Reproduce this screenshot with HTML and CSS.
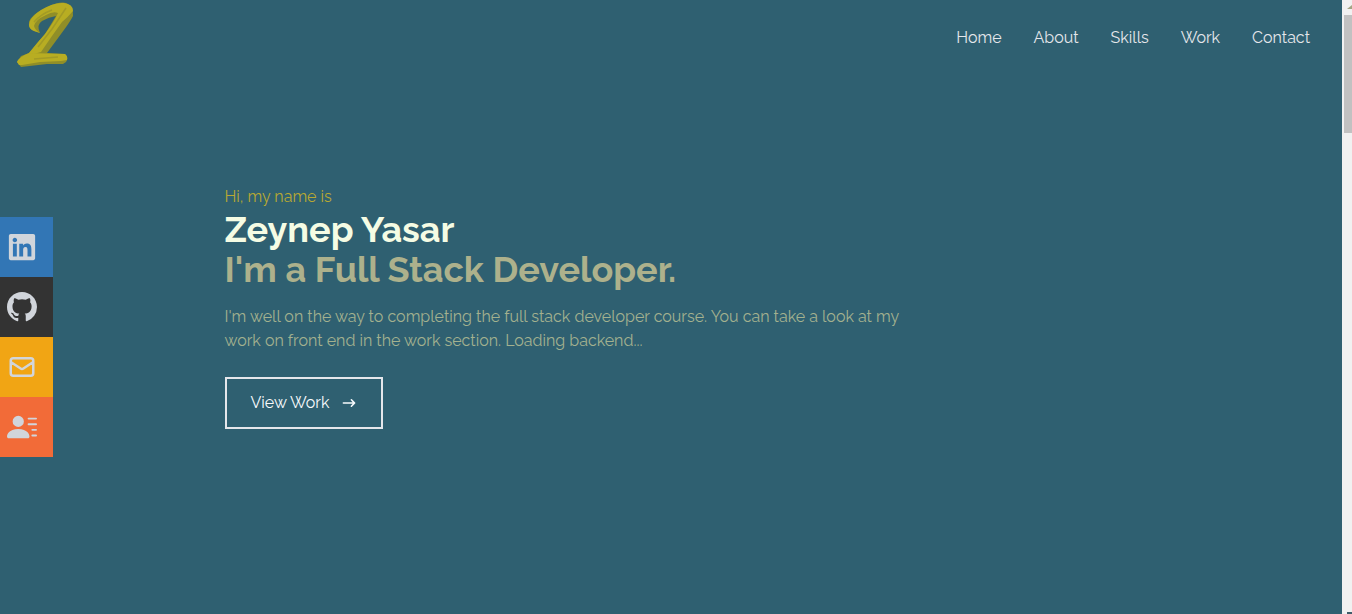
FILE: index.html
```html
<!DOCTYPE html>
<html lang="en">
<head>
<meta charset="utf-8">
<meta name="viewport" content="width=device-width, initial-scale=1">
<title>Zeynep Yasar</title>
<link rel="stylesheet" href="styles.css">
</head>
<body>
<div class="page">
  <header class="navbar">
    <a class="logo" href="#home" aria-label="Zeynep Yasar">
      <svg width="60" height="68" viewBox="0 0 60 68">
        <path fill="#908e28" d="M13 22Q15 15 29 8Q44 1 50 3Q58 6 57 16Q54 22 45 34L31 53 49 54Q53 58 50 62L47 64 31 64 5 67 1 62 5 56 13 53Q21 43 29 34L40 16Q33 17 26 21Q20 25 24 33L18 31Q12 28 13 22Z"/>
        <path fill="#b8ad22" d="M13 25Q13 18 25 10Q38 2 48 3Q57 4 57 11Q52 17 46 22L36 36 25 52 18 54 13 53Q21 43 29 34Q38 22 42 13Q37 11 30 15Q19 20 18 26Q19 30 24 33L18 31Q13 29 13 25Z"/>
        <path fill="#b8ad22" d="M1 62Q3 57 13 53L49 54Q52 56 51 60L45 61 24 62 6 65 3 65Z"/>
        <path fill="none" stroke="#a39b25" stroke-width="1.5" d="M50 8Q42 20 36 29L22 47M18 59L42 57M18 22Q25 14 36 10"/>
      </svg>
    </a>
    <nav>
      <ul class="menu">
        <li><a href="#home">Home</a></li>
        <li><a href="#about">About</a></li>
        <li><a href="#skills">Skills</a></li>
        <li><a href="#work">Work</a></li>
        <li><a href="#contact">Contact</a></li>
      </ul>
    </nav>
  </header>

  <main class="hero" id="home">
    <p class="greeting">Hi, my name is</p>
    <h1 class="name">Zeynep Yasar</h1>
    <h2 class="role">I'm a Full Stack Developer.</h2>
    <p class="intro">I'm well on the way to completing the full stack developer course. You can take a look at my work on front end in the work section. Loading backend...</p>
    <button class="view-work" type="button">View Work
      <svg width="16" height="16" viewBox="0 0 20 20" fill="currentColor" aria-hidden="true"><path fill-rule="evenodd" d="M12.293 5.293a1 1 0 011.414 0l4 4a1 1 0 010 1.414l-4 4a1 1 0 01-1.414-1.414L14.586 11H3a1 1 0 110-2h11.586l-2.293-2.293a1 1 0 010-1.414z"/></svg>
    </button>
  </main>

  <aside class="socials">
    <a class="social linkedin" href="#linkedin" aria-label="LinkedIn">
      <svg width="30" height="30" viewBox="-32 0 512 512" fill="currentColor"><path d="M416 32H31.900C14.300 32 0 46.500 0 64.300v383.400C0 465.500 14.300 480 31.900 480H416c17.600 0 32-14.500 32-32.300V64.300c0-17.800-14.400-32.300-32-32.300zM135.400 416H69V202.200h66.500V416zm-33.200-243c-21.300 0-38.500-17.300-38.500-38.500S80.900 96 102.200 96c21.200 0 38.500 17.300 38.500 38.500 0 21.300-17.200 38.500-38.500 38.500zm282.100 243h-66.400V312c0-24.800-.5-56.700-34.500-56.700-34.600 0-39.900 27-39.900 54.900V416h-66.400V202.200h63.700v29.200h.9c8.900-16.800 30.600-34.500 62.900-34.500 67.200 0 79.700 44.300 79.700 101.900V416z"/></svg>
    </a>
    <a class="social github" href="#github" aria-label="GitHub">
      <svg width="30" height="30" viewBox="0 0 16 16" fill="currentColor"><path d="M8 0C3.580 0 0 3.580 0 8c0 3.540 2.290 6.530 5.470 7.590.4.070.55-.17.55-.38 0-.19-.01-.82-.01-1.490-2.010.37-2.530-.49-2.690-.94-.09-.23-.48-.94-.82-1.130-.28-.15-.68-.52-.01-.53.63-.01 1.080.58 1.230.82.72 1.210 1.870.87 2.330.66.070-.52.28-.87.51-1.070-1.780-.2-3.640-.89-3.640-3.950 0-.87.31-1.590.82-2.150-.08-.2-.36-1.020.08-2.120 0 0 .67-.21 2.200.82.64-.18 1.320-.27 2-.27s1.360.09 2 .27c1.530-1.040 2.200-.82 2.200-.82.44 1.100.16 1.920.08 2.120.51.56.82 1.270.82 2.150 0 3.070-1.870 3.750-3.650 3.950.29.25.54.73.54 1.480 0 1.070-.01 1.930-.01 2.200 0 .21.15.46.55.38A8.010 8.010 0 0016 8c0-4.420-3.580-8-8-8z"/></svg>
    </a>
    <a class="social mail" href="#email" aria-label="Email">
      <svg width="30" height="30" viewBox="0 0 24 24" fill="none" stroke="currentColor" stroke-width="2" stroke-linecap="round" stroke-linejoin="round"><path d="M3 8l7.890 5.260a2 2 0 002.220 0L21 8M5 19h14a2 2 0 002-2V7a2 2 0 00-2-2H5a2 2 0 00-2 2v10a2 2 0 002 2z"/></svg>
    </a>
    <a class="social resume" href="#resume" aria-label="Resume">
      <svg width="30" height="30" viewBox="0 0 16 16" fill="currentColor"><path d="M6 8a3 3 0 100-6 3 3 0 000 6zm-5 6s-1 0-1-1 1-4 6-4 6 3 6 4-1 1-1 1H1zM11 3.500a.5.5 0 01.5-.5h4a.5.5 0 010 1h-4a.5.5 0 01-.5-.5zm.5 2.500a.5.5 0 000 1h4a.5.5 0 000-1h-4zm2 3a.5.5 0 000 1h2a.5.5 0 000-1h-2zm0 3a.5.5 0 000 1h2a.5.5 0 000-1h-2z"/></svg>
    </a>
  </aside>
</div>
<div class="scrollbar" aria-hidden="true">
  <span class="arrow-up"></span>
  <span class="thumb"></span>
  <span class="arrow-down"></span>
</div>
</body>
</html>
```

FILE: styles.css
```css
* {
  box-sizing: border-box;
  margin: 0;
  padding: 0;
}

body {
  display: grid;
  grid-template-columns: 1fr 10px;
  min-height: 100vh;
  background: #2f6071;
  color: #d1d5db;
  font-family: Raleway, Lato, "Open Sans", sans-serif;
  font-size: 16px;
  line-height: 24px;
}

a {
  color: inherit;
  text-decoration: none;
}

svg {
  display: block;
}

.page {
  position: relative;
  display: flex;
  flex-direction: column;
}

.navbar {
  display: flex;
  justify-content: space-between;
  align-items: center;
  height: 76px;
  padding: 0 32px 0 16px;
}

.logo {
  align-self: flex-start;
}

.menu {
  display: flex;
  gap: 32px;
  list-style: none;
  color: #e5e7eb;
}

.hero {
  display: flex;
  flex-direction: column;
  align-items: flex-start;
  width: 100%;
  max-width: 893px;
  margin: 0 auto;
  padding-top: 109px;
}

.greeting {
  color: #b8a832;
}

.name,
.role {
  font-size: 36px;
  line-height: 40px;
  font-weight: 700;
}

.name {
  color: #f5fce4;
}

.role {
  color: #adb18c;
}

.intro {
  max-width: 700px;
  padding: 16px 0 24px;
  color: #a3b18f;
}

.view-work {
  display: flex;
  align-items: center;
  gap: 12px;
  padding: 12px 24px;
  border: 2px solid #e5e7eb;
  background: transparent;
  color: #f8fafc;
  font: inherit;
}

.socials {
  position: absolute;
  top: 217px;
  left: 0;
  width: 53px;
}

.social {
  display: flex;
  align-items: center;
  height: 60px;
  padding-left: 7px;
}

.linkedin {
  background: #3276b5;
}

.github {
  background: #333333;
}

.mail {
  background: #f1a514;
}

.resume {
  background: #f26b38;
}

.scrollbar {
  display: flex;
  flex-direction: column;
  align-items: flex-end;
  overflow: hidden;
  background: #f1f1f1;
}

.arrow-up {
  width: 5px;
  height: 4px;
  margin: 5px 0 6px;
  background: #a3a584;
  clip-path: polygon(0 100%, 100% 0, 100% 100%);
}

.thumb {
  width: 8px;
  height: 118px;
  background: #c1c1c1;
}

.arrow-down {
  width: 5px;
  height: 2px;
  margin-top: auto;
  background: #3f5d6a;
}
```
